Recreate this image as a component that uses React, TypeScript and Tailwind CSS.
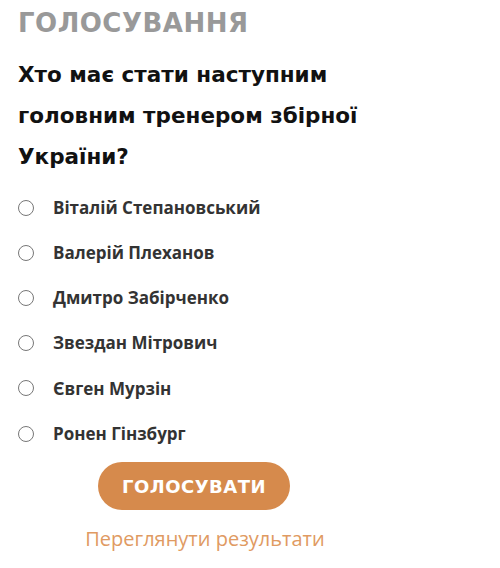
import React, { useState } from "react";

const OPTIONS = [
  "Віталій Степановський",
  "Валерій Плеханов",
  "Дмитро Забірченко",
  "Звездан Мітрович",
  "Євген Мурзін",
  "Ронен Гінзбург",
];

export default function App() {
  const [choice, setChoice] = useState<number | null>(null);

  return (
    <div className="w-[500px] h-[568px] bg-white px-[18px] pt-[6px] font-['DejaVu_Sans',sans-serif]">
      <h2 className="text-[26px] leading-[34px] font-bold tracking-[0.5px] text-[#999999]">
        ГОЛОСУВАННЯ
      </h2>
      <h3 className="mt-[14px] w-[375px] text-[21.5px] leading-[41px] font-bold text-[#111111]">
        Хто має стати наступним головним тренером збірної України?
      </h3>
      <div className="mt-[8px] flex flex-col">
        {OPTIONS.map((name, i) => (
          <label
            key={name}
            className="flex items-center h-[45.2px] cursor-pointer"
            onClick={() => setChoice(i)}
          >
            <span className="w-[16px] h-[16px] rounded-full border border-[#777777] flex items-center justify-center">
              {choice === i && <span className="w-[8px] h-[8px] rounded-full bg-[#555555]" />}
            </span>
            <span className="ml-[19px] text-[17px] font-bold text-[#333333] font-['Open_Sans',sans-serif]">
              {name}
            </span>
          </label>
        ))}
      </div>
      <button className="mt-[6px] ml-[80px] w-[192px] h-[48px] rounded-full bg-[#d68a4c] text-white text-[18px] font-bold tracking-[0.5px]">
        ГОЛОСУВАТИ
      </button>
      <div className="w-[374px] mt-[14px] flex justify-center">
        <a className="text-[20px] leading-[30px] text-[#e09a62] font-['Open_Sans',sans-serif]">
          Переглянути результати
        </a>
      </div>
    </div>
  );
}
